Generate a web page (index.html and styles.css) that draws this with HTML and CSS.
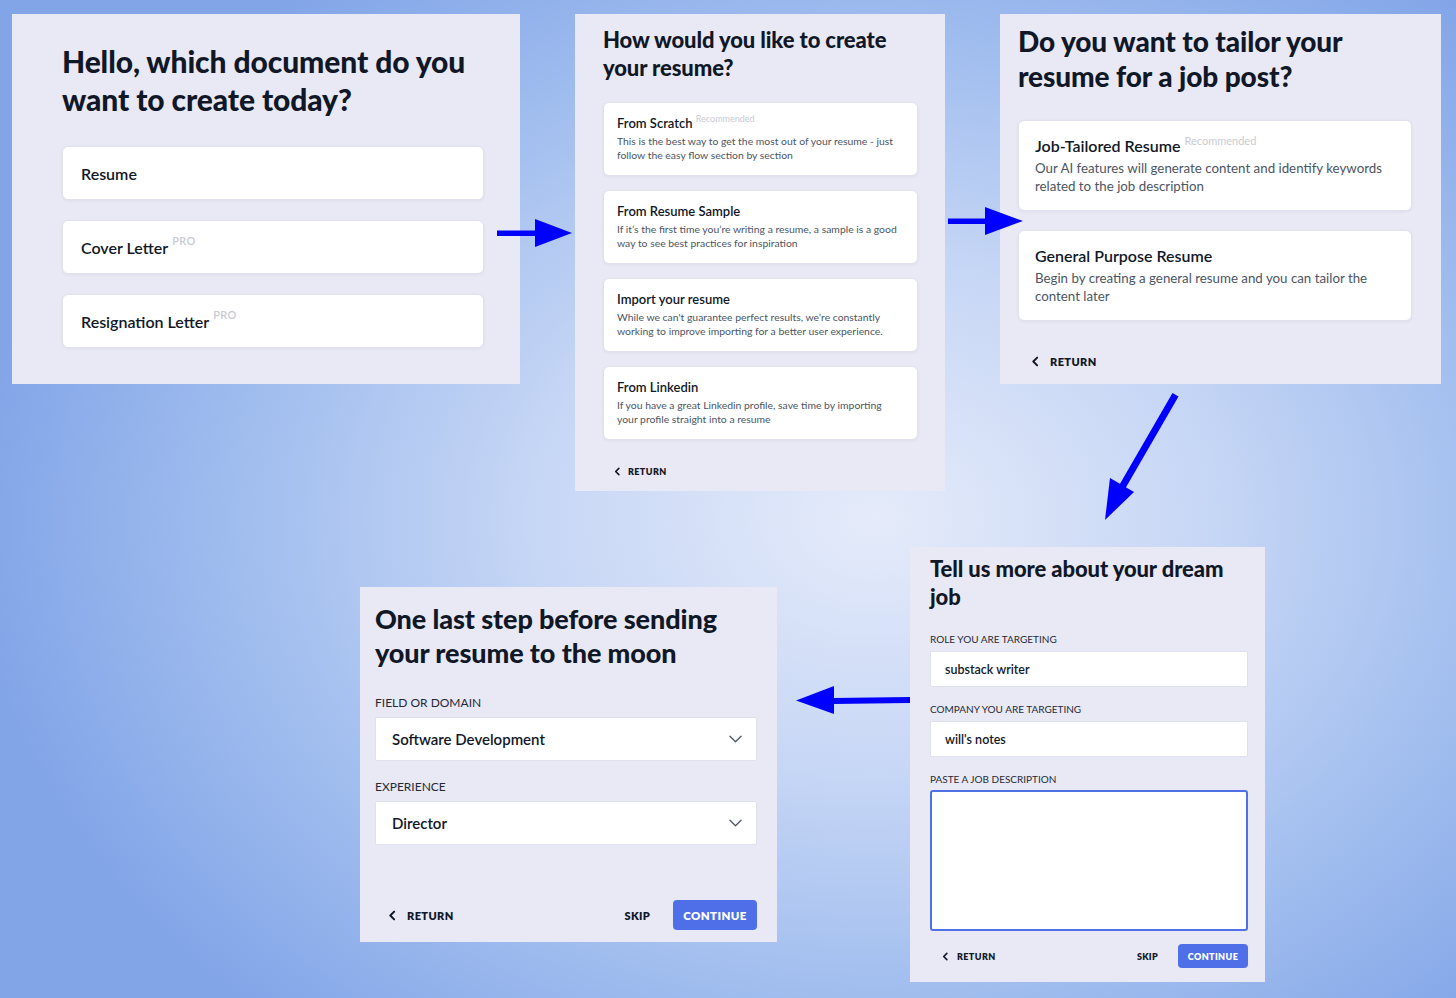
FILE: index.html
```html
<!DOCTYPE html>
<html lang="en">
<head>
<meta charset="utf-8">
<title>Resume flow</title>
<link rel="stylesheet" href="styles.css">
</head>
<body>
<div class="canvas">

  <section class="panel p-doc">
    <h1 class="title t-doc">Hello, which document do you want to create today?</h1>
    <div class="doc-list">
      <div class="card doc-card">Resume</div>
      <div class="card doc-card">Cover Letter <sup class="tag">PRO</sup></div>
      <div class="card doc-card">Resignation Letter <sup class="tag">PRO</sup></div>
    </div>
  </section>

  <section class="panel p-how">
    <h1 class="title t-how">How would you like to create your resume?</h1>
    <div class="how-list">
      <div class="card how-card">
        <div class="opt-title">From Scratch <sup class="tag tag-rec">Recommended</sup></div>
        <p class="opt-desc">This is the best way to get the most out of your resume - just follow the easy flow section by section</p>
      </div>
      <div class="card how-card">
        <div class="opt-title">From Resume Sample</div>
        <p class="opt-desc">If it’s the first time you’re writing a resume, a sample is a good way to see best practices for inspiration</p>
      </div>
      <div class="card how-card">
        <div class="opt-title">Import your resume</div>
        <p class="opt-desc">While we can't guarantee perfect results, we’re constantly working to improve importing for a better user experience.</p>
      </div>
      <div class="card how-card">
        <div class="opt-title">From Linkedin</div>
        <p class="opt-desc">If you have a great Linkedin profile, save time by importing your profile straight into a resume</p>
      </div>
    </div>
    <div class="return r-how">
      <svg class="chev" viewBox="0 0 10 10"><path d="M6.5 1.5 L3 5 L6.5 8.5" /></svg>
      <span>RETURN</span>
    </div>
  </section>

  <section class="panel p-tailor">
    <h1 class="title t-tailor">Do you want to tailor your resume for a job post?</h1>
    <div class="tailor-list">
      <div class="card tailor-card">
        <div class="opt-title">Job-Tailored Resume <sup class="tag tag-rec">Recommended</sup></div>
        <p class="opt-desc">Our AI features will generate content and identify keywords related to the job description</p>
      </div>
      <div class="card tailor-card">
        <div class="opt-title">General Purpose Resume</div>
        <p class="opt-desc">Begin by creating a general resume and you can tailor the content later</p>
      </div>
    </div>
    <div class="return r-tailor">
      <svg class="chev" viewBox="0 0 10 10"><path d="M6.5 1.5 L3 5 L6.5 8.5" /></svg>
      <span>RETURN</span>
    </div>
  </section>

  <section class="panel p-dream">
    <h1 class="title t-dream">Tell us more about your dream job</h1>
    <label class="field-label fl-dream first">ROLE YOU ARE TARGETING</label>
    <div class="input">substack writer</div>
    <label class="field-label fl-dream">COMPANY YOU ARE TARGETING</label>
    <div class="input">will's notes</div>
    <label class="field-label fl-dream">PASTE A JOB DESCRIPTION</label>
    <div class="textarea"></div>
    <div class="footer f-dream">
      <div class="return">
        <svg class="chev" viewBox="0 0 10 10"><path d="M6.5 1.5 L3 5 L6.5 8.5" /></svg>
        <span>RETURN</span>
      </div>
      <span class="skip">SKIP</span>
      <span class="btn">CONTINUE</span>
    </div>
  </section>

  <section class="panel p-last">
    <h1 class="title t-last">One last step before sending your resume to the moon</h1>
    <label class="field-label fl-last first">FIELD OR DOMAIN</label>
    <div class="select">
      <span>Software Development</span>
      <svg class="down" viewBox="0 0 14 8"><path d="M1 1 L7 7 L13 1" /></svg>
    </div>
    <label class="field-label fl-last">EXPERIENCE</label>
    <div class="select">
      <span>Director</span>
      <svg class="down" viewBox="0 0 14 8"><path d="M1 1 L7 7 L13 1" /></svg>
    </div>
    <div class="footer f-last">
      <div class="return">
        <svg class="chev" viewBox="0 0 10 10"><path d="M6.5 1.5 L3 5 L6.5 8.5" /></svg>
        <span>RETURN</span>
      </div>
      <span class="skip">SKIP</span>
      <span class="btn">CONTINUE</span>
    </div>
  </section>

  <svg class="arrows" viewBox="0 0 1456 998" width="1456" height="998">
    <g fill="#0000ff" stroke="none">
      <rect x="497" y="230.5" width="40" height="5.5" />
      <polygon points="535,219 572,233 535,247" />
      <rect x="948" y="218.5" width="40" height="5.5" />
      <polygon points="985,207 1023,221 985,235" />
      <polygon points="910,697 833,698 833,704 910,703" />
      <polygon points="834,686 796,700.5 834,714" />
      <polygon points="1172.5,393 1178.5,396.5 1125,489 1119,485.5" />
      <polygon points="1110,478 1134,492 1105,520" />
    </g>
  </svg>
</div>
</body>
</html>
```

FILE: styles.css
```css
* { box-sizing: border-box; }

html, body {
  margin: 0;
  padding: 0;
}

body {
  width: 1456px;
  height: 998px;
  overflow: hidden;
  font-family: "Lato", "Liberation Sans", sans-serif;
  color: #111827;
  background: radial-gradient(ellipse 62% 68% at 60% 52%, #e5ebfa 0%, #c6d6f5 38%, #a3bfef 68%, #82a5e8 100%);
}

.canvas {
  position: relative;
  width: 1456px;
  height: 998px;
}

.panel {
  position: absolute;
  background: #e9e9f5;
  display: flex;
  flex-direction: column;
}

.title {
  margin: 0;
  font-weight: 900;
  color: #101828;
  letter-spacing: -0.1px;
}

.card {
  background: #ffffff;
  border: 1px solid #dfe2ee;
  border-radius: 6px;
  box-shadow: 0 1px 3px rgba(30, 40, 90, 0.06);
}

.tag {
  font-size: 0.66em;
  color: #c9cbd3;
  font-weight: 600;
  vertical-align: top;
  position: relative;
  top: -6px;
  letter-spacing: 0.3px;
}

.tag-rec {
  font-size: 9px;
  font-weight: 400;
  letter-spacing: 0;
  top: -4px;
}

/* Panel 1 */
.p-doc {
  left: 12px;
  top: 14px;
  width: 508px;
  height: 370px;
  padding: 28px 0 0 50px;
}

.t-doc {
  font-size: 30px;
  line-height: 38px;
  width: 420px;
}

.doc-list {
  margin-top: 28px;
  width: 422px;
  display: flex;
  flex-direction: column;
  gap: 20px;
}

.doc-card {
  height: 54px;
  display: flex;
  align-items: center;
  padding-left: 18px;
  font-size: 16px;
  font-weight: 600;
  color: #111827;
}

.doc-card .tag {
  font-size: 11px;
  margin-left: 4px;
  top: -7px;
}

/* Panel 2 */
.p-how {
  left: 575px;
  top: 14px;
  width: 370px;
  height: 477px;
  padding: 12px 0 0 28px;
}

.t-how {
  font-size: 22px;
  line-height: 28px;
  width: 300px;
}

.how-list {
  margin-top: 20px;
  width: 315px;
  display: flex;
  flex-direction: column;
  gap: 14px;
}

.how-card {
  height: 74px;
  padding: 12px 14px 0 13px;
}

.how-card .opt-title {
  font-size: 13px;
  line-height: 16px;
  font-weight: 600;
  color: #111827;
}

.how-card .opt-desc {
  margin: 3px 0 0;
  font-size: 10.4px;
  line-height: 14px;
  color: #4b5563;
}

.return {
  display: flex;
  align-items: center;
  font-weight: 800;
  color: #111827;
  letter-spacing: 0.4px;
}

.chev {
  fill: none;
  stroke: #111827;
  stroke-width: 1.8;
  stroke-linecap: round;
  stroke-linejoin: round;
}

.r-how {
  margin-top: 26px;
  margin-left: 10px;
  font-size: 9px;
  gap: 6px;
}

.r-how .chev {
  width: 9px;
  height: 9px;
}

/* Panel 3 */
.p-tailor {
  left: 1000px;
  top: 14px;
  width: 441px;
  height: 370px;
  padding: 10px 0 0 18px;
}

.t-tailor {
  font-size: 28px;
  line-height: 35px;
  width: 340px;
}

.tailor-list {
  margin-top: 26px;
  width: 394px;
  display: flex;
  flex-direction: column;
  gap: 19px;
}

.tailor-card {
  height: 91px;
  padding: 15px 17px 0 16px;
}

.tailor-card .opt-title {
  font-size: 16px;
  line-height: 20px;
  font-weight: 600;
  color: #111827;
}

.tailor-card .tag-rec {
  font-size: 11px;
  top: -5px;
}

.tailor-card .opt-desc {
  margin: 3px 0 0;
  font-size: 13.3px;
  line-height: 18px;
  color: #4b5563;
}

.r-tailor {
  margin-top: 34px;
  margin-left: 12px;
  font-size: 11px;
  gap: 9px;
}

.r-tailor .chev {
  width: 11px;
  height: 11px;
}

/* Panel 4 */
.p-dream {
  left: 910px;
  top: 547px;
  width: 355px;
  height: 435px;
  padding: 8px 17px 14px 20px;
}

.t-dream {
  font-size: 22px;
  line-height: 28px;
}

.field-label {
  display: block;
  color: #1f2937;
}

.fl-dream {
  font-size: 10px;
  line-height: 14px;
  margin: 15px 0 5px;
}

.fl-dream.first {
  margin-top: 21px;
}

.input {
  height: 36px;
  background: #fff;
  border: 1px solid #dfe2ee;
  border-radius: 2px;
  display: flex;
  align-items: center;
  padding-left: 14px;
  font-size: 12.5px;
  font-weight: 600;
  color: #111827;
}

.textarea {
  height: 141px;
  background: #fff;
  border: 2px solid #4f70e6;
  border-radius: 3px;
  margin-top: -1px;
}

.footer {
  margin-top: auto;
  display: flex;
  align-items: center;
}

.footer .return {
  margin-right: auto;
}

.skip {
  font-weight: 800;
  color: #111827;
  letter-spacing: 0.3px;
}

.btn {
  background: #4e6fe8;
  color: #fff;
  font-weight: 800;
  letter-spacing: 0.4px;
  border-radius: 4px;
  display: flex;
  align-items: center;
  justify-content: center;
}

.f-dream .return {
  font-size: 9px;
  gap: 7px;
  margin-left: 11px;
}

.f-dream .chev {
  width: 9px;
  height: 9px;
}

.f-dream .skip {
  font-size: 9px;
  margin-right: 20px;
}

.f-dream .btn {
  width: 70px;
  height: 24px;
  font-size: 9px;
}

/* Panel 5 */
.p-last {
  left: 360px;
  top: 587px;
  width: 417px;
  height: 355px;
  padding: 15px 20px 12px 15px;
}

.t-last {
  font-size: 27px;
  line-height: 34px;
}

.fl-last {
  font-size: 12px;
  line-height: 16px;
  margin: 18px 0 6px;
}

.fl-last.first {
  margin-top: 25px;
}

.select {
  height: 44px;
  background: #fff;
  border: 1px solid #dfe2ee;
  border-radius: 2px;
  display: flex;
  align-items: center;
  justify-content: space-between;
  padding: 0 14px 0 16px;
  font-size: 15px;
  font-weight: 600;
  color: #111827;
}

.down {
  width: 13px;
  height: 8px;
  fill: none;
  stroke: #4b5563;
  stroke-width: 1.4;
  stroke-linecap: round;
  stroke-linejoin: round;
}

.f-last .return {
  font-size: 11px;
  gap: 9px;
  margin-left: 12px;
}

.f-last .chev {
  width: 11px;
  height: 11px;
}

.f-last .skip {
  font-size: 11px;
  margin-right: 23px;
}

.f-last .btn {
  width: 84px;
  height: 30px;
  font-size: 11.5px;
}

.arrows {
  position: absolute;
  left: 0;
  top: 0;
  pointer-events: none;
}
```
